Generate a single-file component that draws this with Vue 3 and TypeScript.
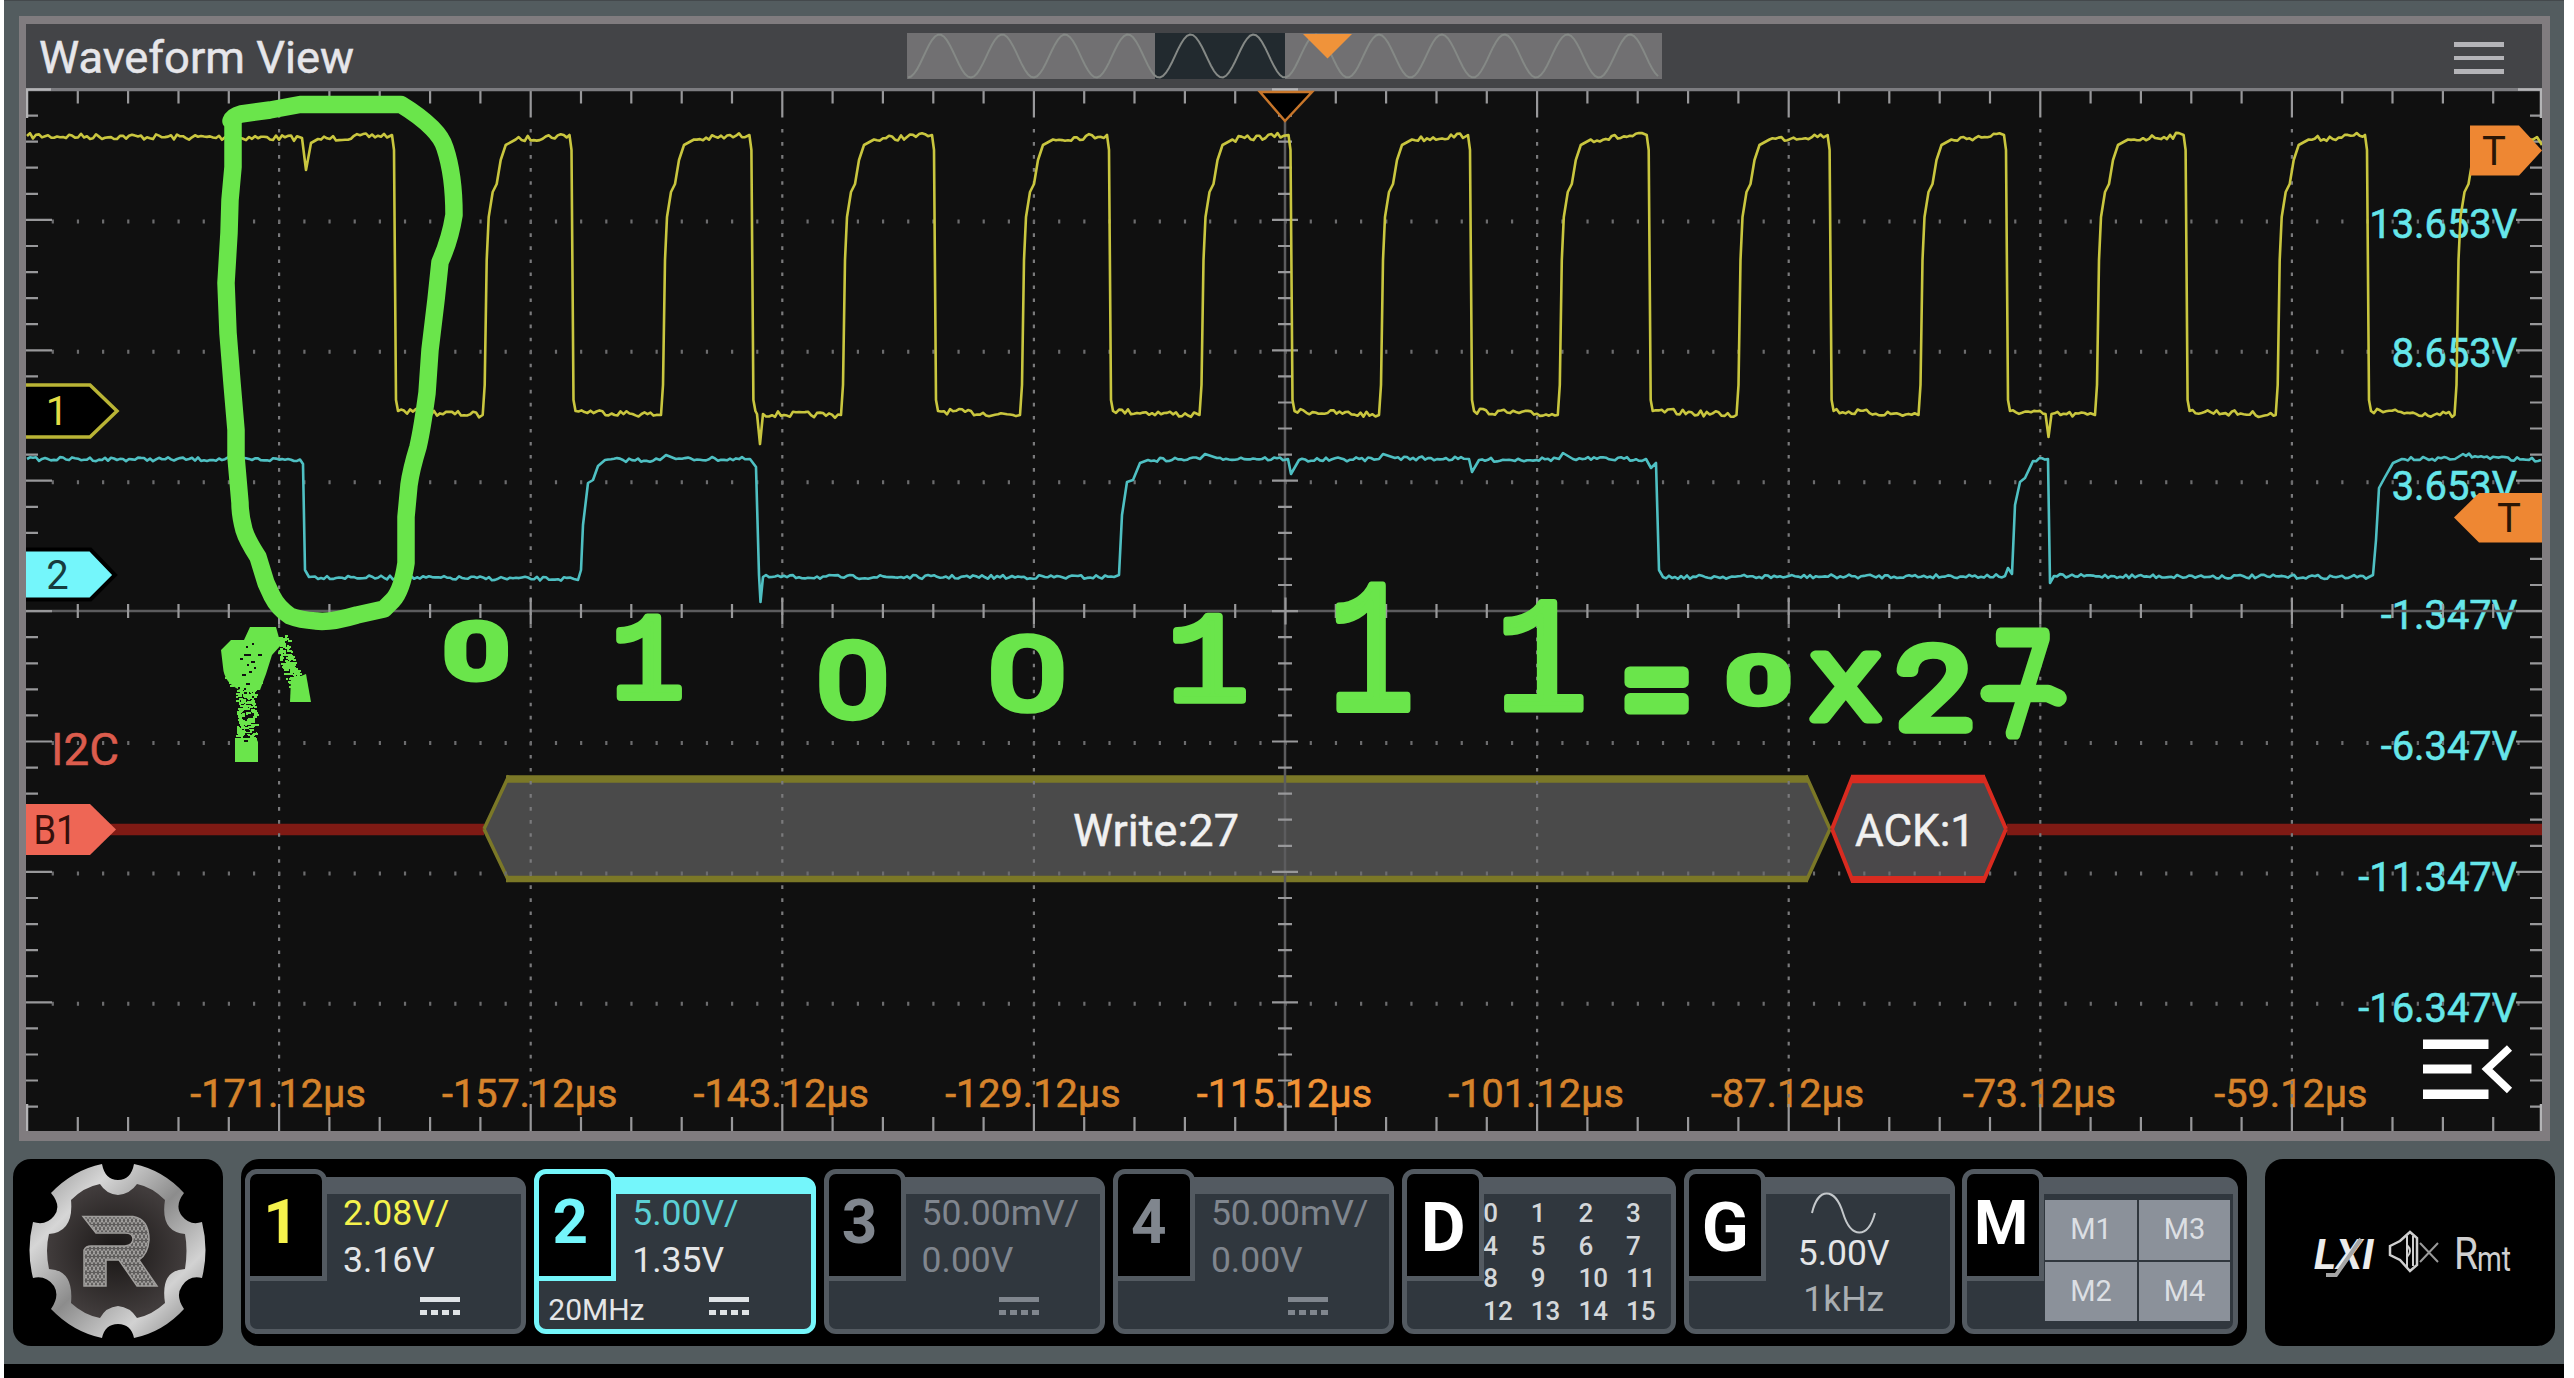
<script setup lang="ts">
type Pt = [number, number]

interface Channel {
  id: string
  scale: string
  offset: string
  limit: string
  tone: string
}

interface Mark {
  ch: string
  x0: number
  x1: number
  y0: number
  y1: number
  font: string
  weight: number
  ink: number
}

const channels: Channel[] = [
  { id: '1', scale: '2.08V/', offset: '3.16V', limit: '', tone: 'ch1' },
  { id: '2', scale: '5.00V/', offset: '1.35V', limit: '20MHz', tone: 'ch2' },
  { id: '3', scale: '50.00mV/', offset: '0.00V', limit: '', tone: 'off' },
  { id: '4', scale: '50.00mV/', offset: '0.00V', limit: '', tone: 'off' },
]
const digital = Array.from({ length: 16 }, (_, i) => i)
const maths = ['M1', 'M3', 'M2', 'M4']

// Graticule: 10 x 8 divisions, in window coordinates
const LEFT = 27.5
const TOP = 89.5
const DX = 251.6
const DY = 130.4
const CX = 1285
const CY = 611
const columns = [1, 2, 3, 4, 6, 7, 8, 9].map((i) => LEFT + i * DX)
const rows = [1, 2, 3, 5, 6, 7].map((i) => TOP + i * DY)

function xTicks(y0: number, y1: number, minor: number, major: number): string {
  let d = ''
  for (let i = 1; i < 50; i++) {
    const x = (LEFT + (i * DX) / 5).toFixed(1)
    const len = i % 5 === 0 ? major : minor
    d += y1 > y0 ? `M${x} ${y0}v${len}` : y1 < y0 ? `M${x} ${y0}v${-len}` : `M${x} ${y0 - len}v${len * 2}`
  }
  return d
}
function yTicks(x: number, dir: number): string {
  let d = ''
  for (let i = 1; i < 40; i++) {
    const y = (TOP + (i * DY) / 5).toFixed(1)
    const len = i % 5 === 0 ? (dir === 0 ? 13 : 26) : dir === 0 ? 7 : 12
    d += dir === 0 ? `M${x - len} ${y}h${len * 2}` : `M${x} ${y}h${len * dir}`
  }
  return d
}
const ticks = [
  xTicks(TOP, TOP + 1, 14, 28),
  xTicks(1132, 1131, 15, 28),
  xTicks(CY, CY, 7, 13.5),
  yTicks(26, 1),
  yTicks(2542, -1),
  yTicks(CX, 0),
].join('')

const timeLabels = [-171, -157, -143, -129, -115, -101, -87, -73, -59].map((n, i) => ({
  text: `${n}.12µs`,
  x: LEFT + (i + 1) * DX - 1,
}))
const voltLabels = [
  { text: '13.653V', y: 237.5 },
  { text: '8.653V', y: 367 },
  { text: '3.653V', y: 499.5 },
  { text: '-1.347V', y: 629 },
  { text: '-6.347V', y: 759.5 },
  { text: '-11.347V', y: 891 },
  { text: '-16.347V', y: 1021.5 },
]

let seed = 7
function rnd(): number {
  seed = (seed * 16807) % 2147483647
  return seed / 2147483647
}

function trace(points: Pt[], amp: number): string {
  let d = `M${points[0][0]} ${points[0][1]}`
  for (let i = 1; i < points.length; i++) {
    const [xa, ya] = points[i - 1]
    const [xb, yb] = points[i]
    if (xb - xa > 12 && Math.abs(yb - ya) < 10) {
      for (let x = xa + 3; x < xb - 2; x += 3) {
        const y = ya + ((yb - ya) * (x - xa)) / (xb - xa) + (rnd() - 0.5) * 2 * amp
        d += `L${x.toFixed(1)} ${y.toFixed(1)}`
      }
    }
    d += `L${xb} ${yb}`
  }
  return d
}

const falls = [393, 570.5, 750.4, 933, 1108, 1289.5, 1469, 1647.7, 1828.6, 2005, 2184.6, 2366]
const rises = [482.7, 661, 841, 1020, 1199.5, 1379, 1557.8, 1736.5, 1918.5, 2095, 2275.7, 2454.5]
const dips: Record<number, Pt> = { 2: [760, 444], 9: [2048.5, 437] }

const clock: Pt[] = [[27, 136], [302, 138], [306, 170], [311, 143], [318, 139]]
falls.forEach((x, i) => {
  clock.push([x - 1, 135], [x + 1, 150], [x + 3, 400], [x + 5, 411])
  const dip = dips[i]
  if (dip) clock.push([dip[0] - 3, 414], dip, [dip[0] + 3, 414])
  const r = rises[i]
  clock.push([r, 415], [r + 2, 385], [r + 4, 260], [r + 6, 217], [r + 10, 192], [r + 14, 184])
  clock.push([r + 18, 160], [r + 23, 145], [r + 33, 139.5])
})
clock.push([2537, 137], [2542, 145])
const clockPath = trace(clock, 2.9)

const data: Pt[] = [
  [27, 459], [300, 459.5], [303, 464], [305, 570], [309, 577], [574, 579], [578, 580], [581, 570], [583, 525],
  [588, 483], [593, 480], [598, 466], [605, 460], [660, 460], [666, 455], [676, 459], [750, 459], [756, 467],
  [759, 575], [760.5, 602], [763, 577], [1114, 577], [1119, 575], [1122, 515], [1127, 482], [1133, 480],
  [1140, 463], [1148, 460], [1200, 459], [1205, 454], [1217, 458], [1288, 459], [1291, 474], [1299, 460],
  [1379, 459], [1383, 454], [1395, 458], [1469, 459], [1472, 472], [1479, 460], [1559, 459], [1563, 453],
  [1573, 459], [1646, 459], [1651, 468], [1656, 463], [1659, 570], [1663, 577], [2005, 576], [2008, 568],
  [2012, 574], [2015, 505], [2020, 482], [2025, 478], [2033, 461], [2048, 459], [2050, 583], [2054, 576],
  [2369, 577], [2373, 575], [2376, 540], [2379, 488], [2385, 477], [2393, 463], [2402, 459], [2455, 459],
  [2463, 454], [2478, 457], [2541, 460],
]
const dataPath = trace(data, 2)

let sine = ''
for (let i = 0; i <= 750; i += 3) {
  const y = 23 + 21.5 * Math.cos((i / 62.8) * Math.PI * 2)
  sine += `${i ? 'L' : 'M'}${i + 1} ${y.toFixed(1)}`
}

// Marker digits, each fitted to its own box
const SANS = 'Roboto, sans-serif'
const MONO = '"Liberation Mono", monospace'
const marks: Mark[] = [
  { ch: '0', x0: 445, x1: 507, y0: 618, y1: 684, font: SANS, weight: 300, ink: 12.5 },
  { ch: '1', x0: 616, x1: 683, y0: 613, y1: 701, font: MONO, weight: 400, ink: 8 },
  { ch: '0', x0: 819, x1: 886, y0: 638, y1: 722, font: SANS, weight: 300, ink: 11.5 },
  { ch: '0', x0: 991, x1: 1063, y0: 632, y1: 715, font: SANS, weight: 300, ink: 11.5 },
  { ch: '1', x0: 1173, x1: 1247, y0: 613, y1: 704, font: MONO, weight: 400, ink: 8 },
  { ch: '1', x0: 1335, x1: 1412, y0: 581, y1: 712, font: MONO, weight: 400, ink: 7 },
  { ch: '1', x0: 1503, x1: 1585, y0: 598, y1: 712, font: MONO, weight: 400, ink: 7 },
  { ch: '=', x0: 1624, x1: 1690, y0: 666, y1: 714, font: SANS, weight: 400, ink: 11 },
  { ch: '0', x0: 1728, x1: 1789, y0: 652, y1: 709, font: SANS, weight: 300, ink: 12.5 },
  { ch: 'x', x0: 1809, x1: 1883, y0: 649, y1: 724, font: SANS, weight: 300, ink: 10 },
  { ch: '2', x0: 1897, x1: 1973, y0: 640, y1: 734, font: SANS, weight: 300, ink: 12.5 },
  { ch: '7', x0: 1994, x1: 2051, y0: 628, y1: 740, font: SANS, weight: 300, ink: 11 },
]
const pen = document.createElement('canvas').getContext('2d')!
const fitted = marks.map((m) => {
  pen.font = `${m.weight} 100px ${m.font}`
  const b = pen.measureText(m.ch)
  const w = b.actualBoundingBoxRight + b.actualBoundingBoxLeft
  const h = b.actualBoundingBoxAscent + b.actualBoundingBoxDescent
  const sx = (m.x1 - m.x0 - m.ink) / w
  const sy = (m.y1 - m.y0 - m.ink) / h
  const tx = m.x0 + m.ink / 2 + b.actualBoundingBoxLeft * sx
  const ty = m.y0 + m.ink / 2 + b.actualBoundingBoxAscent * sy
  return { ...m, transform: `matrix(${sx} 0 0 ${sy} ${tx} ${ty})`, stroke: m.ink / Math.sqrt(sx * sy) }
})

// Spray-brush texture of the arrow
function specks(n: number, xa: number, xb: number, ya: number, yb: number, lean = 0): string {
  let d = ''
  for (let i = 0; i < n; i++) {
    const t = rnd()
    const x = Math.round(xa + rnd() * (xb - xa) + lean * t)
    const y = Math.round(ya + t * (yb - ya))
    const w = 2 + Math.floor(rnd() * 3)
    d += `M${x} ${y}h${w}v2h${-w}z`
  }
  return d
}
const spray = specks(230, 236, 255, 684, 740) + specks(60, 224, 262, 645, 688) + specks(170, 272, 286, 635, 690, 18)
const holes = specks(14, 228, 262, 640, 690) + specks(10, 244, 254, 728, 740)
</script>

<template>
  <div class="screen">
    <div class="scope">
      <section class="view">
        <header class="title">
          <svg class="title-text" width="330" height="64"><text x="13" y="49" textLength="315" lengthAdjust="spacingAndGlyphs">Waveform View</text></svg>
          <svg class="overview" width="755" height="46">
            <rect width="755" height="46" fill="#717072" />
            <rect x="248" width="130" height="46" fill="#222a2f" />
            <path :d="sine" fill="none" stroke="#858986" stroke-width="2" />
            <path d="M396 1h49l-24.500 24.500z" fill="#f0933a" />
          </svg>
          <span class="burger"><i /><i /><i /></span>
        </header>

        <svg class="plot" width="2516" height="1043" viewBox="26 88 2516 1043">
          <g class="volts">
            <text v-for="l in voltLabels" :key="l.text" x="2517" :y="l.y">{{ l.text }}</text>
          </g>
          <g class="times">
            <text v-for="(l, i) in timeLabels" :key="l.text" :x="l.x" :y="1106.5" :class="{ mid: i === 4 }">{{ l.text }}</text>
          </g>

          <path d="M100 829.500H484M2007 829.500H2544" stroke="#7f1a14" stroke-width="11.500" />
          <path d="M485 829L508 779H1806L1829 829L1806 879H508Z" fill="#4a4a4a" />
          <path d="M484 829L509 775.500M484 829L509 881.500M1806 775.500L1830 829M1806 881.500L1830 829" class="byte" stroke-width="3.500" />
          <path d="M506 779H1808" class="byte" stroke-width="7.500" />
          <path d="M506 879H1808" class="byte" stroke-width="6.500" />
          <path d="M1831 829L1853 779H1983L2007 829L1983 879H1853Z" fill="#4a484a" />
          <path d="M1832 829L1853 776M1832 829L1853 882M1983 776L2006 829M1983 882L2006 829" class="ack" stroke-width="4" />
          <path d="M1851 779H1985" class="ack" stroke-width="8.500" />
          <path d="M1851 879.500H1985" class="ack" stroke-width="7" />

          <path v-for="x in columns" :key="'c' + x" :d="`M${x} 129V1102`" class="vdots" />
          <path v-for="y in rows" :key="'r' + y" :d="`M51.700 ${y + 1.500}H2520`" class="hdots" />
          <path :d="`M26 ${CY}H2542M${CX} 90V1131`" stroke="#5c5c5e" stroke-width="2.500" />
          <path :d="ticks" stroke="#98989a" stroke-width="2.200" />
          <path d="M26 89.500H2542" stroke="#7c7c80" stroke-width="3.500" />
          <path d="M27 90V118M26 89.500H51M2541 90V118M2518 89.500H2542M27 1104V1131M2541 1104V1131M1272 89.500H1298" stroke="#b4b4b6" stroke-width="2.500" />

          <path :d="dataPath" fill="none" stroke="#4fc0c3" stroke-width="2.600" stroke-linejoin="round" />
          <path :d="clockPath" fill="none" stroke="#c9c63f" stroke-width="2.600" stroke-linejoin="round" />

          <path d="M1260 92H1312L1285 121Z" fill="#000" stroke="#c8762a" stroke-width="2.500" />

          <path d="M24 385H90L117 411L90 437H24" fill="#000" stroke="#b9b435" stroke-width="3.500" />
          <path d="M24 549.500H90.500L115 575L90.500 599.500H24Z" fill="#74f6fb" stroke="#000" stroke-width="4" />
          <path d="M26 804H90L116 829.500L90 855H26Z" fill="#ee6655" />
          <path d="M2470 125.500H2519L2542 150.500L2519 175.500H2470Z" fill="#ee8733" />
          <path d="M2544 493H2479L2454 517.500L2479 542.500H2544Z" fill="#ee8733" />
          <g class="tags">
            <text x="57" y="425" fill="#e2dc45">1</text>
            <text x="57.500" y="589" fill="#173c3e">2</text>
            <text x="55" y="844" fill="#35100c" textLength="43" lengthAdjust="spacingAndGlyphs">B1</text>
            <text x="2494" y="165" fill="#2a1606">T</text>
            <text x="2509" y="532" fill="#2a1606">T</text>
          </g>
          <text x="51" y="765" class="proto i2c" textLength="68" lengthAdjust="spacingAndGlyphs">I2C</text>
          <text x="1073" y="846" class="proto" textLength="166" lengthAdjust="spacingAndGlyphs">Write:27</text>
          <text x="1855" y="846" class="proto" textLength="120" lengthAdjust="spacingAndGlyphs">ACK:1</text>

          <g fill="#fff">
            <path d="M2423 1039.500h65.500v9.500h-65.500zM2423 1064.500h48.500v9h-48.500zM2423 1089.500h65.500v9.500h-65.500z" />
            <path d="M2509.500 1048L2487 1069L2509.500 1090.500" fill="none" stroke="#fff" stroke-width="7.500" />
          </g>

          <g class="marker">
            <path
              class="loop"
              d="M231 121Q233 116 241 114L270 110L300 104.500H401Q420 116 432 128Q442 138 445 148Q454 175 454 215Q450 240 440 262L436 300L430 350L427 393Q422 430 418 447Q411 470 409 485L406 517V563Q402 590 393 600L384 609L357 615Q330 623 316 621Q300 620 290 616Q278 608 272 596L266 583L258 557Q247 540 244 530Q240 515 240 503L236 457V430L232 383L228 333L226 283L229 233L230 200L233 167V123"
            />
            <path d="M250 627H276L281 645L272 655L266 674L260 690L240 690Q224 683 223 667L221 650L231 640L244 640Z" />
            <path d="M235 738H256L258 742V762H235Z" />
            <path d="M291 680L306 674L311 702H290Z" />
            <path :d="spray" />
            <path :d="holes" fill="#101010" />
            <text
              v-for="m in fitted"
              :key="m.x0"
              :transform="m.transform"
              :font-family="m.font"
              :font-weight="m.weight"
              :stroke-width="m.stroke"
            >{{ m.ch }}</text>
            <path d="M1989 693.500H2048L2058 698" class="loop" />
          </g>
        </svg>
      </section>

      <footer class="bar">
        <div class="home">
          <svg width="210" height="187" viewBox="13 1159 210 187">
            <defs>
              <linearGradient id="steel" x1="0" y1="0" x2="1" y2="1">
                <stop offset="0" stop-color="#8b8b8b" />
                <stop offset=".25" stop-color="#d6d6d6" />
                <stop offset=".5" stop-color="#8c8c8c" />
                <stop offset=".75" stop-color="#d2d2d2" />
                <stop offset="1" stop-color="#777" />
              </linearGradient>
              <radialGradient id="core">
                <stop offset="0" stop-color="#191615" />
                <stop offset="1" stop-color="#413c3c" />
              </radialGradient>
              <pattern id="lattice" width="8" height="8" patternUnits="userSpaceOnUse">
                <rect width="8" height="8" fill="#5f5d5c" />
                <path d="M0 8L4 1L8 8M0 1L4 8L8 1" stroke="#a9a7a5" stroke-width="1" fill="none" />
              </pattern>
            </defs>
            <path
              d="M102 1164Q105 1180 118 1180Q131 1180 134 1164Q163 1170 184 1193Q174 1206 182 1216Q190 1226 202 1222Q209 1250 202 1278Q189 1275 182 1286Q175 1296 184 1309Q163 1332 134 1338Q131 1324 118 1324Q105 1324 102 1338Q73 1332 51 1309Q60 1296 54 1286Q46 1275 33 1278Q26 1250 33 1222Q46 1226 54 1216Q62 1206 51 1193Q73 1170 102 1164Z"
              fill="url(#steel)"
            />
            <path
              d="M100 1184Q106 1194 118 1195Q130 1194 137 1184Q152 1187 165 1200Q160 1232 185 1234Q188 1250 185 1269Q160 1270 165 1303Q152 1315 137 1318Q130 1307 118 1306Q106 1307 100 1318Q84 1315 71 1303Q74 1270 49 1269Q45 1250 49 1234Q74 1232 71 1200Q84 1187 100 1184Z"
              fill="url(#core)"
            />
            <path
              d="M83 1216.500H133Q149 1219 149 1240Q148 1254 139 1260L157 1286H137L119 1260H106V1286H84V1250Q86 1246 91 1246H125Q133 1245 133 1239Q133 1233 125 1233H96Z"
              fill="url(#lattice)"
              stroke="#a09e9c"
              stroke-width="1.500"
            />
          </svg>
        </div>

        <div class="cards">
          <article v-for="c in channels" :key="c.id" class="card" :class="c.tone">
            <div class="tab">{{ c.id }}</div>
            <div class="body">
              <p class="scale">{{ c.scale }}</p>
              <p class="offset">{{ c.offset }}</p>
              <div class="foot">
                <span class="limit">{{ c.limit }}</span>
                <span class="dc"><i class="solid" /><i class="dashes"><b /><b /><b /><b /></i></span>
              </div>
            </div>
          </article>

          <article class="card la">
            <div class="tab">D</div>
            <div class="body">
              <div class="bits"><span v-for="n in digital" :key="n">{{ n }}</span></div>
            </div>
          </article>

          <article class="card gen">
            <div class="tab">G</div>
            <div class="body">
              <svg width="66" height="42"><path d="M1 21C7 -5 24 -5 32 21S57 47 64 21" fill="none" stroke="#c4c8cb" stroke-width="2" /></svg>
              <p>5.00V</p>
              <p class="freq">1kHz</p>
            </div>
          </article>

          <article class="card math">
            <div class="tab">M</div>
            <div class="body">
              <div class="cells"><span v-for="m in maths" :key="m">{{ m }}</span></div>
            </div>
          </article>
        </div>

        <div class="status">
          <svg width="290" height="187" viewBox="2265 1159 290 187">
            <text x="2314" y="1269" class="lxi" textLength="60" lengthAdjust="spacingAndGlyphs">LXI</text>
            <path d="M2326 1275H2336L2361 1239" fill="none" stroke="#a5a5a5" stroke-width="4" />
            <path d="M2390 1246L2400 1241L2410 1232L2417 1238V1265L2410 1271L2400 1260L2390 1255Z" fill="none" stroke="#cfcfcf" stroke-width="2.500" />
            <path d="M2407 1236V1268M2413 1236V1266M2407 1245Q2413 1251 2407 1257" fill="none" stroke="#cfcfcf" stroke-width="2" />
            <path d="M2420 1243L2438 1262M2438 1243L2420 1262" stroke="#999" stroke-width="2" />
            <text x="2454" y="1269" class="rmt" textLength="24" lengthAdjust="spacingAndGlyphs" font-size="45">R</text>
            <text x="2477" y="1271" class="rmt" textLength="34" lengthAdjust="spacingAndGlyphs" font-size="35">mt</text>
          </svg>
        </div>
      </footer>
    </div>
  </div>
</template>

<style>
body {
  background: #fff;
}
</style>

<style scoped>
.screen {
  width: 2560px;
  height: 1378px;
  margin-left: 4px;
  overflow: hidden;
  display: flex;
  flex-direction: column;
  background: #000;
  font-family: Roboto, sans-serif;
}
.scope {
  height: 1363.5px;
  flex: none;
  box-sizing: border-box;
  padding: 15px 14px 0 15px;
  background: #535c5f;
  border-top: 1px solid #44494c;
}
.view {
  box-sizing: border-box;
  width: 2531px;
  height: 1125px;
  border: 8px solid #807c7f;
  border-left-width: 7px;
  border-bottom-width: 10px;
  background: #101010;
}
.title {
  height: 64px;
  display: flex;
  align-items: flex-start;
  background: #434447;
}
.title-text {
  flex: none;
}
.title-text text {
  font-size: 45px;
  fill: #e6e6ea;
  stroke: #e6e6ea;
  stroke-width: 0.5;
}
.overview {
  flex: none;
  margin: 9px 0 0 551px;
}
.burger {
  display: flex;
  flex-direction: column;
  gap: 9px;
  margin: 18px 38px 0 auto;
}
.burger i {
  width: 50px;
  height: 4.5px;
  background: #b4b4b8;
}
.plot {
  display: block;
}
.volts text {
  font-size: 39.8px;
  fill: #66e6ea;
  stroke: #66e6ea;
  stroke-width: 0.6;
  text-anchor: end;
}
.times text {
  font-size: 39.6px;
  fill: #d6832b;
  stroke: #d6832b;
  stroke-width: 0.6;
  text-anchor: middle;
}
.times .mid {
  fill: #f09335;
  stroke: #f09335;
}
.byte {
  stroke: #7b7827;
  fill: none;
}
.ack {
  stroke: #d92b20;
  fill: none;
}
.vdots {
  stroke: #7a7a7c;
  stroke-width: 2.2;
  stroke-dasharray: 3.6 9.44;
}
.hdots {
  stroke: #6c6c6e;
  stroke-width: 4;
  stroke-dasharray: 2.2 22.96;
}
.tags text {
  font-size: 40px;
  text-anchor: middle;
}
.proto {
  font-size: 44.5px;
  fill: #f0f0f0;
  stroke: #f0f0f0;
  stroke-width: 0.5;
}
.i2c {
  fill: #dc5c4d;
  stroke: #dc5c4d;
}
.marker {
  fill: #6ae54b;
}
.marker text {
  font-size: 100px;
  stroke: #6ae54b;
  stroke-linejoin: round;
}
.loop {
  fill: none;
  stroke: #6ae54b;
  stroke-width: 17.5;
  stroke-linecap: round;
  stroke-linejoin: round;
}
.bar {
  display: flex;
  margin: 17.5px 0 0 -6px;
}
.home,
.cards,
.status {
  height: 187px;
  flex: none;
  background: #000;
  border-radius: 18px;
}
.home {
  width: 210px;
}
.home svg,
.status svg {
  display: block;
}
.cards {
  box-sizing: border-box;
  width: 2006px;
  margin: 0 18px;
  padding: 10px 0 0 4px;
  display: flex;
  gap: 8px;
}
.status {
  width: 290px;
}
.card {
  --edge: #535a61;
  position: relative;
  flex: none;
  width: 281.3px;
  height: 165px;
}
.ch2 {
  --edge: #74f6fb;
}
.body {
  box-sizing: border-box;
  height: 157px;
  margin-top: 8px;
  border: 5px solid var(--edge);
  border-top-width: 17px;
  border-radius: 12px;
  background: #30373e;
}
.tab {
  box-sizing: border-box;
  position: absolute;
  left: 0;
  top: 0;
  width: 82px;
  height: 112px;
  border: 5px solid var(--edge);
  border-radius: 12px 12px 0 0;
  background: #000;
  text-align: center;
  padding-right: 10px;
  font-weight: 700;
  font-size: 62px;
  line-height: 95px;
  color: #fff;
}
p {
  margin: 0;
  padding-left: 93px;
  font-size: 35.5px;
  line-height: 47px;
  color: #e4e6e8;
  white-space: nowrap;
}
.scale {
  margin-top: -4px;
}
.ch1 .tab,
.ch1 .scale {
  color: #f5f24c;
}
.ch2 .tab {
  color: #74f6fb;
}
.ch2 .scale {
  color: #5bcfd4;
}
.off .tab,
.off p {
  color: #80868e;
}
.foot {
  display: flex;
  margin-top: 8px;
}
.limit {
  box-sizing: border-box;
  width: 170px;
  height: 32px;
  padding-left: 9px;
  font-size: 30px;
  line-height: 36px;
  color: #e4e6e8;
}
.dc {
  width: 40px;
  padding-top: 5px;
  color: #dfe3e6;
}
.off .dc {
  color: #80868e;
}
.solid {
  display: block;
  height: 5px;
  background: currentColor;
}
.dashes {
  display: flex;
  justify-content: space-between;
  margin-top: 8px;
}
.dashes b {
  width: 7px;
  height: 5px;
  background: currentColor;
}
.la {
  width: 274px;
}
.gen {
  width: 271px;
}
.math {
  width: 276px;
  margin-left: -1px;
}
.la .tab,
.gen .tab,
.math .tab {
  padding-right: 0;
  font-size: 69px;
  line-height: 108px;
}
.math .tab {
  padding-right: 4px;
  font-size: 62px;
  line-height: 98px;
}
.bits {
  display: grid;
  grid-template-columns: repeat(4, 47.6px);
  grid-auto-rows: 32.6px;
  margin: 2.5px 0 0 76px;
  font-size: 26px;
  font-weight: 500;
  line-height: 34px;
  color: #d4d7da;
}
.gen .body {
  display: flex;
  flex-direction: column;
  align-items: center;
  padding-left: 48px;
}
.gen svg {
  margin-top: -2px;
}
.gen p {
  padding: 0;
  margin-top: -4px;
}
.gen .freq {
  margin-top: -1px;
  color: #a9aeb2;
}
.cells {
  display: grid;
  grid-template: repeat(2, 59.5px) / repeat(2, 91.5px);
  gap: 2px;
  margin: 6.5px 0 0 78px;
}
.cells span {
  background: #8b919a;
  color: #dcdfe3;
  font-size: 29px;
  line-height: 59px;
  text-align: center;
}
.lxi {
  font-size: 43px;
  font-weight: 700;
  font-style: italic;
  fill: #ececec;
}
.rmt {
  fill: #d0d0d0;
}
</style>
